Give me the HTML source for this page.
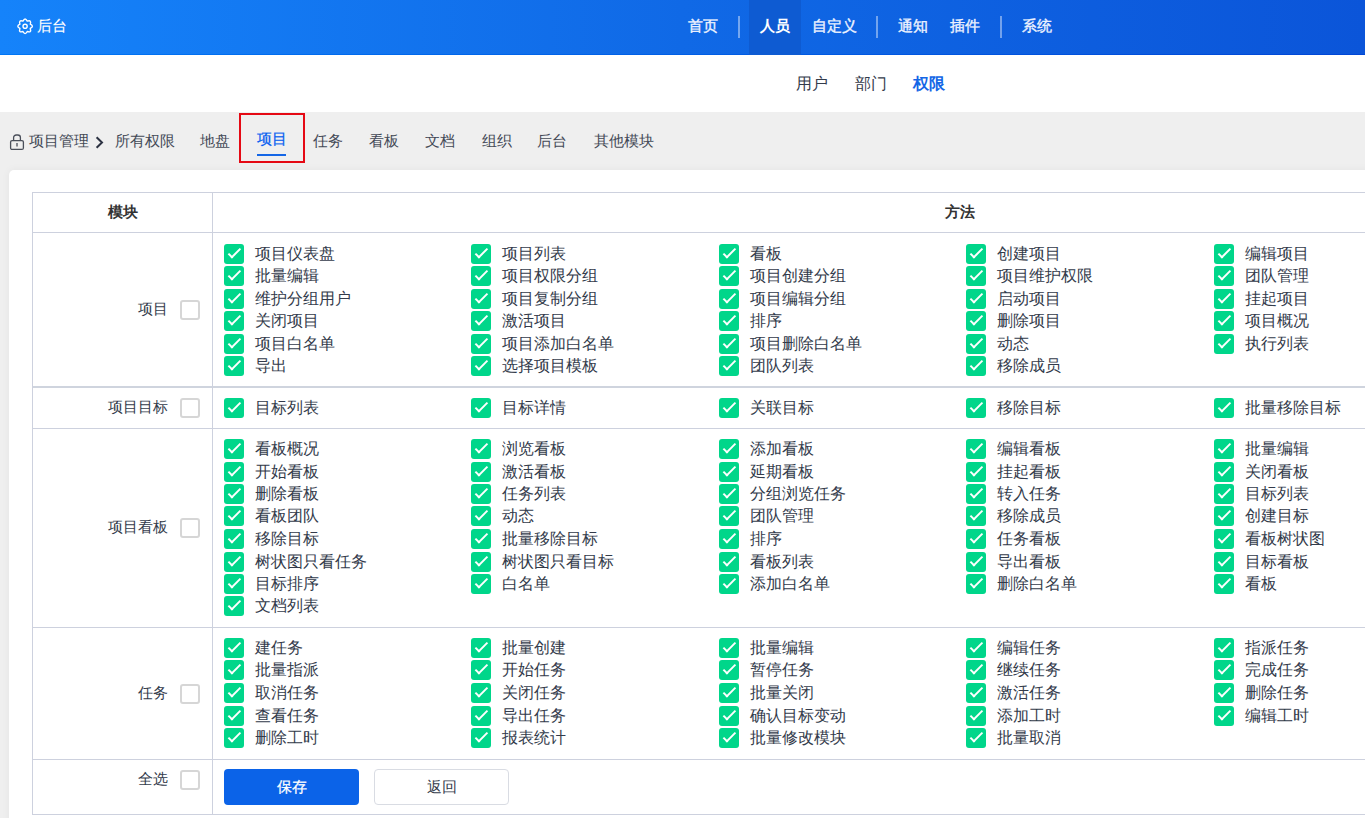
<!DOCTYPE html>
<html><head><meta charset="utf-8">
<style>
html,body{margin:0;padding:0;overflow:hidden;width:1365px;height:818px;background:#efefef;}
body{font-family:"Liberation Sans",sans-serif;color:#333b4b;position:relative;}
.hdr{position:absolute;left:0;top:0;width:1365px;height:55px;background:linear-gradient(90deg,#1583fa 0%,#1069e6 50%,#0b55d9 100%);}
.hdr .bl{position:absolute;left:0;right:0;bottom:0;height:1px;background:linear-gradient(90deg,#0076f5,#0046d6);}
.logo{position:absolute;left:37px;top:13.5px;font-size:15px;line-height:24px;color:#fff;-webkit-text-stroke:0.12px #fff;white-space:nowrap;}
.nav{position:absolute;top:-2px;height:55px;font-size:15px;line-height:55px;color:#eef3ff;font-weight:normal;-webkit-text-stroke:0.35px #eef3ff;white-space:nowrap;}
.sep{position:absolute;top:16px;width:2px;height:22px;background:rgba(255,255,255,.42);}
.act{position:absolute;left:749px;top:0;width:52px;height:55px;background:#0e5bd2;}
.sub{position:absolute;top:70px;font-size:16px;line-height:28px;color:#333b4b;white-space:nowrap;}
.subact{color:#1466e6;font-weight:bold;}
.wht{position:absolute;left:0;top:55px;width:1365px;height:57px;background:#fff;}
.tab{position:absolute;top:127px;font-size:15px;line-height:28px;color:#434956;white-space:nowrap;}
.tabact{color:#0a5ff0;font-weight:normal;-webkit-text-stroke:0.25px #0a5ff0;top:125px;}
.ul{position:absolute;left:257px;top:154px;width:29px;height:2px;background:#1466e6;}
.red{position:absolute;left:239px;top:113px;width:62px;height:46px;border:2px solid #e50914;}
.card{position:absolute;left:9px;top:170px;width:1800px;height:700px;background:#fff;border-radius:5px;box-shadow:0 0 8px rgba(0,0,0,.05);}
.hl{position:absolute;left:32px;width:1676px;height:1px;background:#cdd1de;}
.vl{position:absolute;top:192px;width:1px;height:623px;background:#cdd1de;}
.th{position:absolute;top:192px;height:40px;line-height:40px;font-size:15px;font-weight:bold;color:#333;text-align:center;}
.lab{position:absolute;right:1197px;font-size:15px;line-height:26px;white-space:nowrap;}
.ucb{position:absolute;left:180px;width:16px;height:16px;border:2px solid #d6d6d6;border-radius:3px;}
.cb{position:absolute;width:20px;height:20px;background:#00d68a;border-radius:3px;}
.cb:after{content:"";position:absolute;left:3.75px;top:4.7px;width:10.5px;height:4px;border-left:2px solid #fff;border-bottom:2px solid #fff;transform:rotate(-45deg);}
.tx{position:absolute;font-size:16px;line-height:26px;white-space:nowrap;}
.btn{position:absolute;top:769px;height:36px;border-radius:4px;font-size:15px;line-height:36px;text-align:center;}
</style></head><body>
<div class="hdr"><div class="bl"></div></div>
<svg style="position:absolute;left:14px;top:14px" width="24" height="24" viewBox="0 0 24 24"><path d="M8.96 7.13 Q11.10 2.90 13.24 7.13 Q17.75 5.65 16.27 10.16 Q20.50 12.30 16.27 14.44 Q17.75 18.95 13.24 17.47 Q11.10 21.70 8.96 17.47 Q4.45 18.95 5.93 14.44 Q1.70 12.30 5.93 10.16 Q4.45 5.65 8.96 7.13 Z" fill="none" stroke="#fff" stroke-width="1.4" stroke-linejoin="round"/><circle cx="11.1" cy="12.3" r="2.1" fill="none" stroke="#fff" stroke-width="1.4"/></svg>
<div class="logo">后台</div>
<div class="act"></div>
<div class="nav" style="left:688px">首页</div>
<div class="sep" style="left:738px"></div>
<div class="nav" style="left:760px;color:#fff;font-weight:bold;-webkit-text-stroke:0">人员</div>
<div class="nav" style="left:812px">自定义</div>
<div class="sep" style="left:876px"></div>
<div class="nav" style="left:898px">通知</div>
<div class="nav" style="left:950px">插件</div>
<div class="sep" style="left:1000px"></div>
<div class="nav" style="left:1022px">系统</div>
<div class="wht"></div>
<div class="sub" style="left:796px">用户</div>
<div class="sub" style="left:855px">部门</div>
<div class="sub subact" style="left:913px">权限</div>
<svg style="position:absolute;left:6px;top:128px" width="24" height="26" viewBox="0 0 24 26"><rect x="4.6" y="12.6" width="12.8" height="8.8" rx="1.5" fill="none" stroke="#4a4f5a" stroke-width="1.3"/><path d="M7.6 12.5V9.6a2.6 2.6 0 0 1 2.6-2.6h1.6a2.6 2.6 0 0 1 2.6 2.6V12.5" fill="none" stroke="#4a4f5a" stroke-width="1.3"/><path d="M11 15v3.6" stroke="#4a4f5a" stroke-width="1.3"/></svg>
<div class="tab" style="left:29px">项目管理</div>
<svg style="position:absolute;left:88px;top:128px" width="24" height="26" viewBox="0 0 24 26"><path d="M8.6 9.2L14 14.5L8.6 19.8" fill="none" stroke="#2c3242" stroke-width="2"/></svg>
<div class="tab" style="left:115px">所有权限</div>
<div class="tab" style="left:200px">地盘</div>
<div class="tab tabact" style="left:257px">项目</div>
<div class="ul"></div>
<div class="red"></div>
<div class="tab" style="left:313px">任务</div>
<div class="tab" style="left:369px">看板</div>
<div class="tab" style="left:425px">文档</div>
<div class="tab" style="left:482px">组织</div>
<div class="tab" style="left:537px">后台</div>
<div class="tab" style="left:594px">其他模块</div>
<div class="card"></div>
<div class="hl" style="top:192px"></div>
<div class="hl" style="top:232px"></div>
<div class="hl" style="top:386px;height:2px;background:#cfd4de"></div>
<div class="hl" style="top:428px"></div>
<div class="hl" style="top:627px"></div>
<div class="hl" style="top:759px"></div>
<div class="hl" style="top:814px"></div>
<div class="vl" style="left:32px"></div>
<div class="vl" style="left:212px"></div>
<div class="th" style="left:33px;width:179px">模块</div>
<div class="th" style="left:213px;width:1494px">方法</div>
<span class="lab" style="top:296px">项目</span><i class="ucb" style="top:300px"></i>
<span class="lab" style="top:394px">项目目标</span><i class="ucb" style="top:398px"></i>
<span class="lab" style="top:514px">项目看板</span><i class="ucb" style="top:518px"></i>
<span class="lab" style="top:680px">任务</span><i class="ucb" style="top:684px"></i>
<span class="lab" style="top:766px">全选</span><i class="ucb" style="top:770px"></i>
<i class="cb" style="left:224px;top:244px"></i><span class="tx" style="left:255px;top:241px">项目仪表盘</span>
<i class="cb" style="left:471px;top:244px"></i><span class="tx" style="left:502px;top:241px">项目列表</span>
<i class="cb" style="left:719px;top:244px"></i><span class="tx" style="left:750px;top:241px">看板</span>
<i class="cb" style="left:966px;top:244px"></i><span class="tx" style="left:997px;top:241px">创建项目</span>
<i class="cb" style="left:1214px;top:244px"></i><span class="tx" style="left:1245px;top:241px">编辑项目</span>
<i class="cb" style="left:224px;top:266px"></i><span class="tx" style="left:255px;top:263px">批量编辑</span>
<i class="cb" style="left:471px;top:266px"></i><span class="tx" style="left:502px;top:263px">项目权限分组</span>
<i class="cb" style="left:719px;top:266px"></i><span class="tx" style="left:750px;top:263px">项目创建分组</span>
<i class="cb" style="left:966px;top:266px"></i><span class="tx" style="left:997px;top:263px">项目维护权限</span>
<i class="cb" style="left:1214px;top:266px"></i><span class="tx" style="left:1245px;top:263px">团队管理</span>
<i class="cb" style="left:224px;top:289px"></i><span class="tx" style="left:255px;top:286px">维护分组用户</span>
<i class="cb" style="left:471px;top:289px"></i><span class="tx" style="left:502px;top:286px">项目复制分组</span>
<i class="cb" style="left:719px;top:289px"></i><span class="tx" style="left:750px;top:286px">项目编辑分组</span>
<i class="cb" style="left:966px;top:289px"></i><span class="tx" style="left:997px;top:286px">启动项目</span>
<i class="cb" style="left:1214px;top:289px"></i><span class="tx" style="left:1245px;top:286px">挂起项目</span>
<i class="cb" style="left:224px;top:311px"></i><span class="tx" style="left:255px;top:308px">关闭项目</span>
<i class="cb" style="left:471px;top:311px"></i><span class="tx" style="left:502px;top:308px">激活项目</span>
<i class="cb" style="left:719px;top:311px"></i><span class="tx" style="left:750px;top:308px">排序</span>
<i class="cb" style="left:966px;top:311px"></i><span class="tx" style="left:997px;top:308px">删除项目</span>
<i class="cb" style="left:1214px;top:311px"></i><span class="tx" style="left:1245px;top:308px">项目概况</span>
<i class="cb" style="left:224px;top:334px"></i><span class="tx" style="left:255px;top:331px">项目白名单</span>
<i class="cb" style="left:471px;top:334px"></i><span class="tx" style="left:502px;top:331px">项目添加白名单</span>
<i class="cb" style="left:719px;top:334px"></i><span class="tx" style="left:750px;top:331px">项目删除白名单</span>
<i class="cb" style="left:966px;top:334px"></i><span class="tx" style="left:997px;top:331px">动态</span>
<i class="cb" style="left:1214px;top:334px"></i><span class="tx" style="left:1245px;top:331px">执行列表</span>
<i class="cb" style="left:224px;top:356px"></i><span class="tx" style="left:255px;top:353px">导出</span>
<i class="cb" style="left:471px;top:356px"></i><span class="tx" style="left:502px;top:353px">选择项目模板</span>
<i class="cb" style="left:719px;top:356px"></i><span class="tx" style="left:750px;top:353px">团队列表</span>
<i class="cb" style="left:966px;top:356px"></i><span class="tx" style="left:997px;top:353px">移除成员</span>
<i class="cb" style="left:224px;top:398px"></i><span class="tx" style="left:255px;top:395px">目标列表</span>
<i class="cb" style="left:471px;top:398px"></i><span class="tx" style="left:502px;top:395px">目标详情</span>
<i class="cb" style="left:719px;top:398px"></i><span class="tx" style="left:750px;top:395px">关联目标</span>
<i class="cb" style="left:966px;top:398px"></i><span class="tx" style="left:997px;top:395px">移除目标</span>
<i class="cb" style="left:1214px;top:398px"></i><span class="tx" style="left:1245px;top:395px">批量移除目标</span>
<i class="cb" style="left:224px;top:439px"></i><span class="tx" style="left:255px;top:436px">看板概况</span>
<i class="cb" style="left:471px;top:439px"></i><span class="tx" style="left:502px;top:436px">浏览看板</span>
<i class="cb" style="left:719px;top:439px"></i><span class="tx" style="left:750px;top:436px">添加看板</span>
<i class="cb" style="left:966px;top:439px"></i><span class="tx" style="left:997px;top:436px">编辑看板</span>
<i class="cb" style="left:1214px;top:439px"></i><span class="tx" style="left:1245px;top:436px">批量编辑</span>
<i class="cb" style="left:224px;top:462px"></i><span class="tx" style="left:255px;top:459px">开始看板</span>
<i class="cb" style="left:471px;top:462px"></i><span class="tx" style="left:502px;top:459px">激活看板</span>
<i class="cb" style="left:719px;top:462px"></i><span class="tx" style="left:750px;top:459px">延期看板</span>
<i class="cb" style="left:966px;top:462px"></i><span class="tx" style="left:997px;top:459px">挂起看板</span>
<i class="cb" style="left:1214px;top:462px"></i><span class="tx" style="left:1245px;top:459px">关闭看板</span>
<i class="cb" style="left:224px;top:484px"></i><span class="tx" style="left:255px;top:481px">删除看板</span>
<i class="cb" style="left:471px;top:484px"></i><span class="tx" style="left:502px;top:481px">任务列表</span>
<i class="cb" style="left:719px;top:484px"></i><span class="tx" style="left:750px;top:481px">分组浏览任务</span>
<i class="cb" style="left:966px;top:484px"></i><span class="tx" style="left:997px;top:481px">转入任务</span>
<i class="cb" style="left:1214px;top:484px"></i><span class="tx" style="left:1245px;top:481px">目标列表</span>
<i class="cb" style="left:224px;top:506px"></i><span class="tx" style="left:255px;top:503px">看板团队</span>
<i class="cb" style="left:471px;top:506px"></i><span class="tx" style="left:502px;top:503px">动态</span>
<i class="cb" style="left:719px;top:506px"></i><span class="tx" style="left:750px;top:503px">团队管理</span>
<i class="cb" style="left:966px;top:506px"></i><span class="tx" style="left:997px;top:503px">移除成员</span>
<i class="cb" style="left:1214px;top:506px"></i><span class="tx" style="left:1245px;top:503px">创建目标</span>
<i class="cb" style="left:224px;top:529px"></i><span class="tx" style="left:255px;top:526px">移除目标</span>
<i class="cb" style="left:471px;top:529px"></i><span class="tx" style="left:502px;top:526px">批量移除目标</span>
<i class="cb" style="left:719px;top:529px"></i><span class="tx" style="left:750px;top:526px">排序</span>
<i class="cb" style="left:966px;top:529px"></i><span class="tx" style="left:997px;top:526px">任务看板</span>
<i class="cb" style="left:1214px;top:529px"></i><span class="tx" style="left:1245px;top:526px">看板树状图</span>
<i class="cb" style="left:224px;top:552px"></i><span class="tx" style="left:255px;top:549px">树状图只看任务</span>
<i class="cb" style="left:471px;top:552px"></i><span class="tx" style="left:502px;top:549px">树状图只看目标</span>
<i class="cb" style="left:719px;top:552px"></i><span class="tx" style="left:750px;top:549px">看板列表</span>
<i class="cb" style="left:966px;top:552px"></i><span class="tx" style="left:997px;top:549px">导出看板</span>
<i class="cb" style="left:1214px;top:552px"></i><span class="tx" style="left:1245px;top:549px">目标看板</span>
<i class="cb" style="left:224px;top:574px"></i><span class="tx" style="left:255px;top:571px">目标排序</span>
<i class="cb" style="left:471px;top:574px"></i><span class="tx" style="left:502px;top:571px">白名单</span>
<i class="cb" style="left:719px;top:574px"></i><span class="tx" style="left:750px;top:571px">添加白名单</span>
<i class="cb" style="left:966px;top:574px"></i><span class="tx" style="left:997px;top:571px">删除白名单</span>
<i class="cb" style="left:1214px;top:574px"></i><span class="tx" style="left:1245px;top:571px">看板</span>
<i class="cb" style="left:224px;top:596px"></i><span class="tx" style="left:255px;top:593px">文档列表</span>
<i class="cb" style="left:224px;top:638px"></i><span class="tx" style="left:255px;top:635px">建任务</span>
<i class="cb" style="left:471px;top:638px"></i><span class="tx" style="left:502px;top:635px">批量创建</span>
<i class="cb" style="left:719px;top:638px"></i><span class="tx" style="left:750px;top:635px">批量编辑</span>
<i class="cb" style="left:966px;top:638px"></i><span class="tx" style="left:997px;top:635px">编辑任务</span>
<i class="cb" style="left:1214px;top:638px"></i><span class="tx" style="left:1245px;top:635px">指派任务</span>
<i class="cb" style="left:224px;top:660px"></i><span class="tx" style="left:255px;top:657px">批量指派</span>
<i class="cb" style="left:471px;top:660px"></i><span class="tx" style="left:502px;top:657px">开始任务</span>
<i class="cb" style="left:719px;top:660px"></i><span class="tx" style="left:750px;top:657px">暂停任务</span>
<i class="cb" style="left:966px;top:660px"></i><span class="tx" style="left:997px;top:657px">继续任务</span>
<i class="cb" style="left:1214px;top:660px"></i><span class="tx" style="left:1245px;top:657px">完成任务</span>
<i class="cb" style="left:224px;top:683px"></i><span class="tx" style="left:255px;top:680px">取消任务</span>
<i class="cb" style="left:471px;top:683px"></i><span class="tx" style="left:502px;top:680px">关闭任务</span>
<i class="cb" style="left:719px;top:683px"></i><span class="tx" style="left:750px;top:680px">批量关闭</span>
<i class="cb" style="left:966px;top:683px"></i><span class="tx" style="left:997px;top:680px">激活任务</span>
<i class="cb" style="left:1214px;top:683px"></i><span class="tx" style="left:1245px;top:680px">删除任务</span>
<i class="cb" style="left:224px;top:706px"></i><span class="tx" style="left:255px;top:703px">查看任务</span>
<i class="cb" style="left:471px;top:706px"></i><span class="tx" style="left:502px;top:703px">导出任务</span>
<i class="cb" style="left:719px;top:706px"></i><span class="tx" style="left:750px;top:703px">确认目标变动</span>
<i class="cb" style="left:966px;top:706px"></i><span class="tx" style="left:997px;top:703px">添加工时</span>
<i class="cb" style="left:1214px;top:706px"></i><span class="tx" style="left:1245px;top:703px">编辑工时</span>
<i class="cb" style="left:224px;top:728px"></i><span class="tx" style="left:255px;top:725px">删除工时</span>
<i class="cb" style="left:471px;top:728px"></i><span class="tx" style="left:502px;top:725px">报表统计</span>
<i class="cb" style="left:719px;top:728px"></i><span class="tx" style="left:750px;top:725px">批量修改模块</span>
<i class="cb" style="left:966px;top:728px"></i><span class="tx" style="left:997px;top:725px">批量取消</span>
<div class="btn" style="left:224px;width:135px;background:#0b63e8;color:#fff;-webkit-text-stroke:0.25px #fff">保存</div>
<div class="btn" style="left:374px;width:133px;height:34px;line-height:34px;border:1px solid #d9dce3;background:#fff;color:#333b4b">返回</div>
</body></html>
